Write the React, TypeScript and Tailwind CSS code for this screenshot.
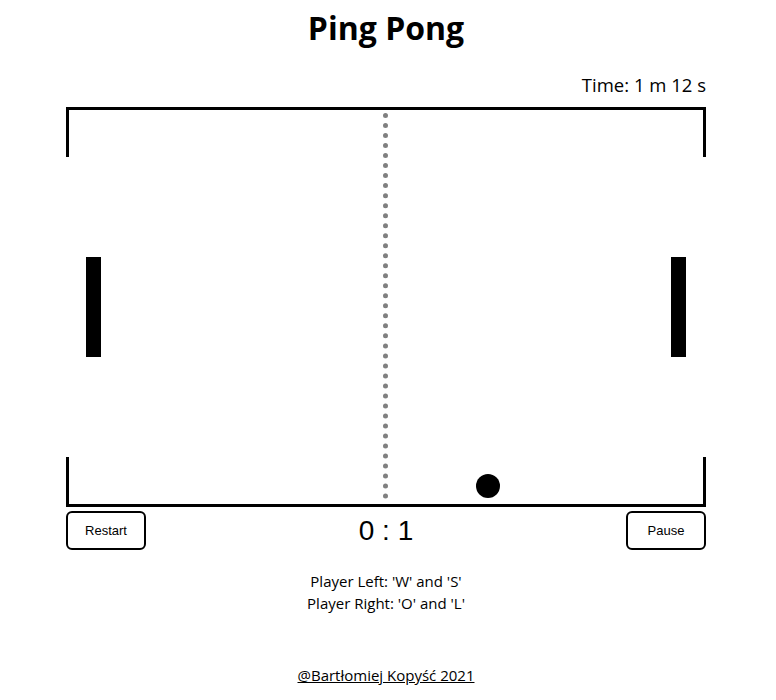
export default function App() {
  return (
    <div className="w-[772px] bg-white text-black font-['Open_Sans',sans-serif]">
      <div className="flex flex-col items-center">
        {/* Title */}
        <h1 className="mt-[8px] text-[32px] leading-[40px] font-bold">Ping Pong</h1>

        {/* Timer */}
        <div className="w-[640px] mt-[25px] text-right text-[18.5px] leading-[24px]">Time: 1 m 12 s</div>

        {/* Board */}
        <div className="relative mt-[10px] h-[400px] w-[640px] border-y-[3px] border-black">
          <div className="absolute -top-[3px] left-0 h-[50px] w-[3px] bg-black" />
          <div className="absolute -top-[3px] right-0 h-[50px] w-[3px] bg-black" />
          <div className="absolute -bottom-[3px] left-0 h-[50px] w-[3px] bg-black" />
          <div className="absolute -bottom-[3px] right-0 h-[50px] w-[3px] bg-black" />
          <div className="absolute left-[317px] top-[3px] bottom-[5px] border-l-[5px] border-dotted border-[#808080]" />
          <div className="absolute left-[20px] top-[147px] h-[100px] w-[15px] bg-black" />
          <div className="absolute left-[605px] top-[147px] h-[100px] w-[15px] bg-black" />
          <div className="absolute left-[410px] top-[364px] h-[24px] w-[24px] rounded-full bg-black" />
        </div>

        {/* Controls */}
        <div className="mt-[4px] flex w-[640px] items-center justify-between font-['Liberation_Sans',Arial,sans-serif]">
          <button className="h-[39px] w-[80px] rounded-md border-2 border-black bg-white text-[13px]">Restart</button>
          <div className="text-[28px] leading-[32px]">0 : 1</div>
          <button className="h-[39px] w-[80px] rounded-md border-2 border-black bg-white text-[13px]">Pause</button>
        </div>

        {/* Help */}
        <div className="mt-[20px] text-center text-[15px] leading-[22px]">
          <p>Player Left: 'W' and 'S'</p>
          <p>Player Right: 'O' and 'L'</p>
        </div>

        {/* Footer */}
        <a href="#" className="mt-[50px] text-[15px] leading-[22px] underline">
          @Bartłomiej Kopyść 2021
        </a>
      </div>
    </div>
  );
}
